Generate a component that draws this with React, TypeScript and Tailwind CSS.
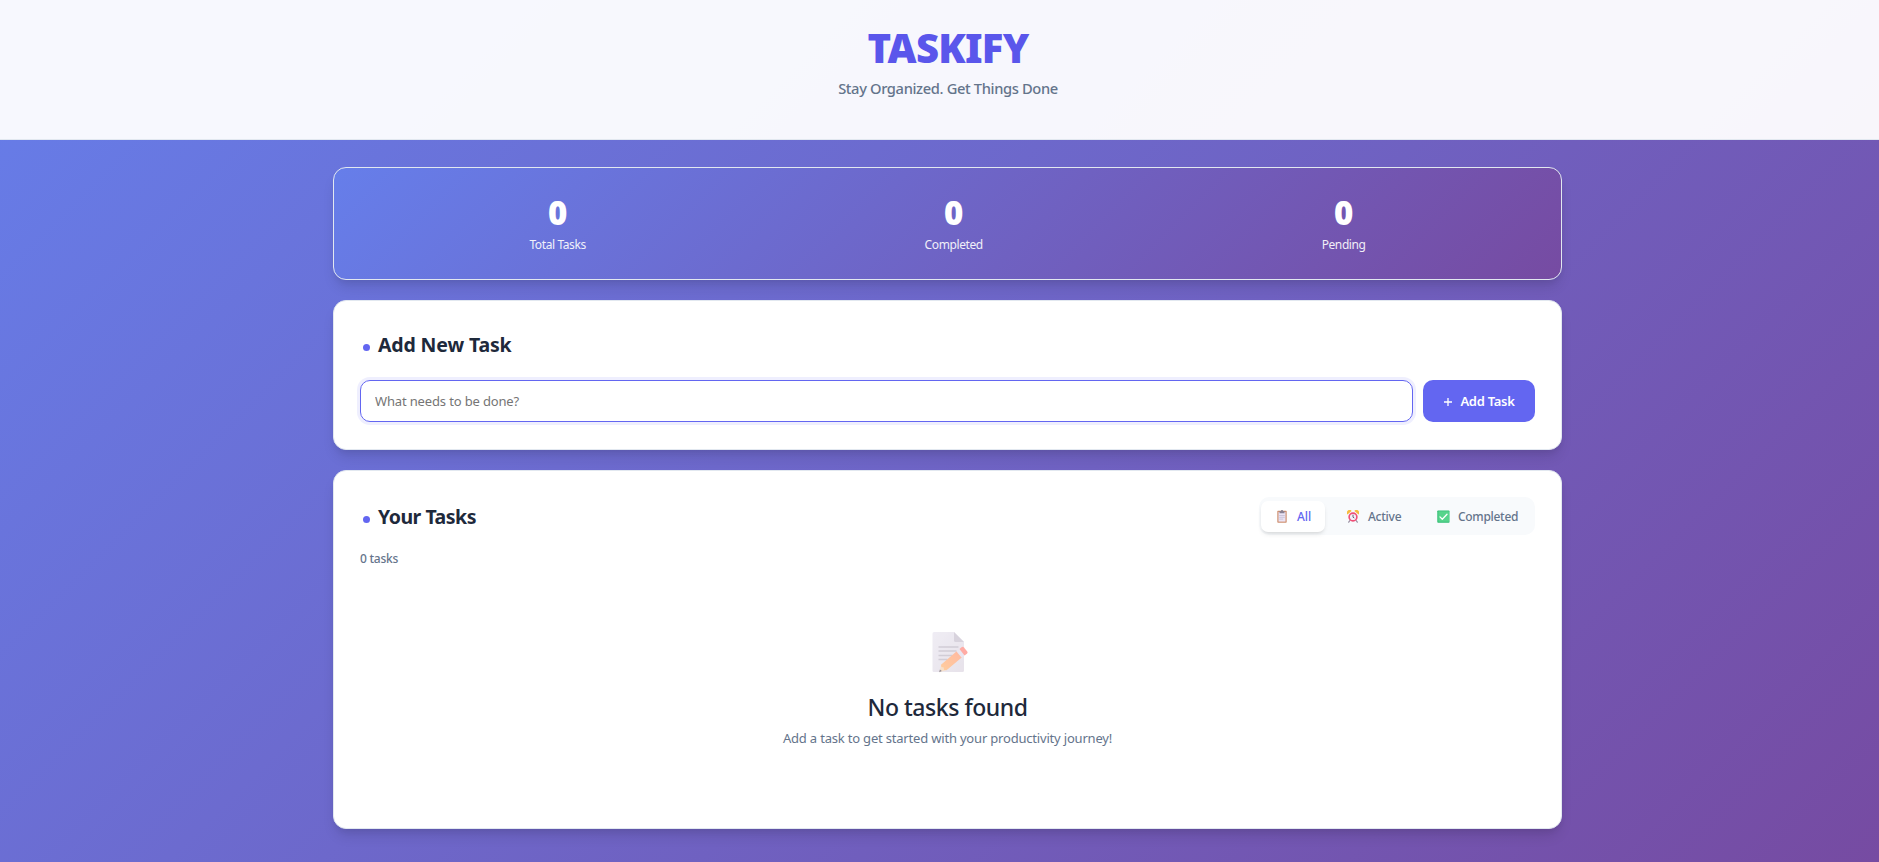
import type { ReactNode } from "react";

function MemoIcon() {
  return (
    <svg width="37" height="42" viewBox="0 0 37 42" className="ml-[5px] block opacity-60">
      <defs>
        <linearGradient id="paper" x1="0" y1="0" x2="1" y2="1">
          <stop offset="0" stopColor="#e6e2ee" />
          <stop offset="1" stopColor="#d8d0dd" />
        </linearGradient>
        <linearGradient id="pencil" x1="0" y1="1" x2="1" y2="0">
          <stop offset="0" stopColor="#ffad5c" />
          <stop offset="1" stopColor="#ff8a66" />
        </linearGradient>
      </defs>
      <path d="M2 1H22l10 10v28.500a1.500 1.500 0 0 1-1.500 1.500h-28.500A1.500 1.500 0 0 1 0.500 39.500V2.500A1.500 1.500 0 0 1 2 1z" fill="url(#paper)" />
      <path d="M22 1v8.500a1.500 1.500 0 0 0 1.500 1.500H32z" fill="#bfb7c8" />
      <path d="M6.500 16h20M6.500 20h18M6.500 24.500h14M6.500 28.500h9" stroke="#b4acbc" strokeWidth="1.500" />
      <path d="M7.500 41l1.700-7.500L13.500 39.500z" fill="#f3cda8" />
      <path d="M7.200 41.200l.7-2.800 1.900 1.700z" fill="#4b4153" />
      <path d="M9 33.700L25 20l5 6.200L14.500 39.200 12 39l-.4-2.400-2.200-.5z" fill="url(#pencil)" />
      <path d="M24.500 20.400l3-2.500 5 6.200-3 2.500z" fill="#dcd6e8" />
      <path d="M27.500 17.900l2-1.600a1.800 1.800 0 0 1 2.500.3l3.200 4a1.600 1.600 0 0 1-.3 2.200l-2.400 1.800z" fill="#ff7468" />
    </svg>
  );
}

function ClipboardIcon() {
  return (
    <svg width="10" height="13" viewBox="0 0 10 13" className="block opacity-90">
      <rect x="0.300" y="0.800" width="9.400" height="12" rx="0.700" fill="#cb8562" />
      <rect x="1.500" y="2" width="7" height="9.600" fill="#e9e2f4" />
      <path d="M2.200 5.500h5.600M2.200 7.300h5.600M2.200 9.100h4" stroke="#b9b0cc" strokeWidth="0.700" />
      <path d="M2.500 1.200h1.300a1.200 1.200 0 0 1 2.400 0h1.300v2.100h-5z" fill="#7d7488" />
    </svg>
  );
}

function AlarmIcon() {
  return (
    <svg width="12" height="13" viewBox="0 0 12 13" className="block opacity-90">
      <path d="M2.900 10.500l-1.200 1.700M9.100 10.500l1.200 1.700" stroke="#8d8398" strokeWidth="1.200" strokeLinecap="round" />
      <path d="M0.500 4.600A2.500 2.500 0 0 1 4.600 0.900z" fill="#f6b52c" />
      <path d="M11.500 4.600A2.500 2.500 0 0 0 7.400 0.900z" fill="#f6b52c" />
      <circle cx="6" cy="7" r="3.900" fill="#f4eff8" stroke="#ef3d68" strokeWidth="1.600" />
      <path d="M6 4.700V7.200l1.300.8" stroke="#4b4057" strokeWidth="0.900" fill="none" />
    </svg>
  );
}

function CheckIcon() {
  return (
    <svg width="13" height="13" viewBox="0 0 13 13" className="block">
      <rect x="0.300" y="0.500" width="12.200" height="12.200" rx="0.800" fill="#2fbd72" />
      <rect x="1.300" y="1.300" width="10.700" height="10.500" rx="0.500" fill="#57d48c" />
      <path d="M3 6.900l2.300 2.300L10 4.300" stroke="#fff" strokeWidth="1.300" fill="none" strokeLinecap="round" strokeLinejoin="round" />
    </svg>
  );
}

const shadow = "shadow-[0_9px_14px_-3px_rgba(0,0,0,0.12),0_4px_6px_-2px_rgba(0,0,0,0.06)]";

function Card({ className, children }: { className: string; children: ReactNode }) {
  return (
    <section className={`rounded-[13px] border border-[#e2e8f0] bg-white px-[26px] ${shadow} ${className}`}>
      {children}
    </section>
  );
}

function Stat({ label }: { label: string }) {
  return (
    <div className="text-center text-white">
      <div className="text-[33px] leading-10 font-black">0</div>
      <div className="mt-[2px] text-[12px] leading-5 tracking-[-0.4px] opacity-90">{label}</div>
    </div>
  );
}

function Heading({ tracking, children }: { tracking: string; children: ReactNode }) {
  return (
    <h2 className={`flex items-center pt-[2px] text-[19.5px] leading-7 font-bold text-[#1e293b] ${tracking}`}>
      <span className="mt-[5px] mr-[8px] ml-[2.5px] size-[7.5px] rounded-full bg-[#6366f1]" />
      {children}
    </h2>
  );
}

export default function App() {
  return (
    <div className="h-[862px] overflow-hidden bg-[linear-gradient(135deg,#667eea_0%,#764ba2_100%)] font-['Noto_Sans','Open_Sans',sans-serif] whitespace-nowrap">
      <header className="h-[140px] border-b border-[#e2e8f0] bg-white/95 pt-[24px] pl-[17px] text-center">
        <h1 className="text-[40px] leading-[48px] font-black tracking-[-0.75px] text-[#5a56eb]">TASKIFY</h1>
        <p className="mt-[4px] text-[14.7px] leading-6 font-medium tracking-[-0.36px] text-[#64748b]">
          Stay Organized. Get Things Done
        </p>
      </header>
      <main className="ml-[333px] flex w-[1229px] flex-col gap-5 pt-[27px]">
        <section className={`flex h-[113px] justify-around rounded-[13px] border border-[#e2e8f0] bg-[linear-gradient(135deg,#667eea_0%,#764ba2_100%)] px-[26px] pt-[25px] ${shadow}`}>
          <Stat label="Total Tasks" />
          <Stat label="Completed" />
          <Stat label="Pending" />
        </section>

        <Card className="h-[150px] pt-[28px]">
          <Heading tracking="tracking-[-0.15px]">Add New Task</Heading>
          <div className="mt-[21px] flex gap-[10px]">
            <input
              placeholder="What needs to be done?"
              className="h-[42px] min-w-0 flex-1 rounded-[10px] border border-[#6366f1] px-[14px] text-[13px] tracking-[-0.15px] shadow-[0_0_0_3px_rgba(99,102,241,0.1)] outline-none placeholder:text-[#757575]"
            />
            <button className="flex h-[42px] w-[112px] items-center justify-center gap-[7px] rounded-[10px] bg-[#6366f1] pt-[1px] text-[13px] font-semibold tracking-[-0.27px] text-white">
              <svg width="10" height="10" viewBox="0 0 10 10">
                <path d="M5 1v8M1 5h8" stroke="currentColor" strokeWidth="1.3" />
              </svg>
              Add Task
            </button>
          </div>
        </Card>

        <Card className="h-[359px] pt-[26px]">
          <div className="flex h-[38px] items-center justify-between">
            <Heading tracking="tracking-[-0.5px]">Your Tasks</Heading>
            <div className="flex h-[38px] w-[276px] rounded-[10px] bg-[#f8fafc] px-[2px] pt-[4px] text-[12px] leading-[31px] font-medium text-[#64748b]">
              <button className="flex h-[31px] w-[64px] items-center rounded-[7px] bg-white pl-[16px] text-[#6366f1] shadow-[0_3px_5px_-1px_rgba(0,0,0,0.1),0_2px_3px_-1px_rgba(0,0,0,0.06)]">
                <ClipboardIcon />
                <span className="ml-[10px]">All</span>
              </button>
              <button className="flex h-[31px] w-[89px] items-center pl-[22px]">
                <AlarmIcon />
                <span className="ml-[9px] tracking-[-0.25px]">Active</span>
              </button>
              <button className="flex h-[31px] items-center pl-[23px]">
                <CheckIcon />
                <span className="ml-[8px] tracking-[-0.3px]">Completed</span>
              </button>
            </div>
          </div>
          <p className="mt-[14px] text-[12px] leading-5 font-medium tracking-[-0.25px] text-[#64748b]">0 tasks</p>
          <div className="flex flex-col items-center pt-[62px]">
            <MemoIcon />
            <h3 className="mt-[18px] text-[23px] leading-8 font-medium tracking-[-0.46px] text-[#1e293b]">No tasks found</h3>
            <p className="mt-[4px] text-[13px] leading-[22px] tracking-[-0.19px] text-[#64748b]">
              Add a task to get started with your productivity journey!
            </p>
          </div>
        </Card>
      </main>
    </div>
  );
}
